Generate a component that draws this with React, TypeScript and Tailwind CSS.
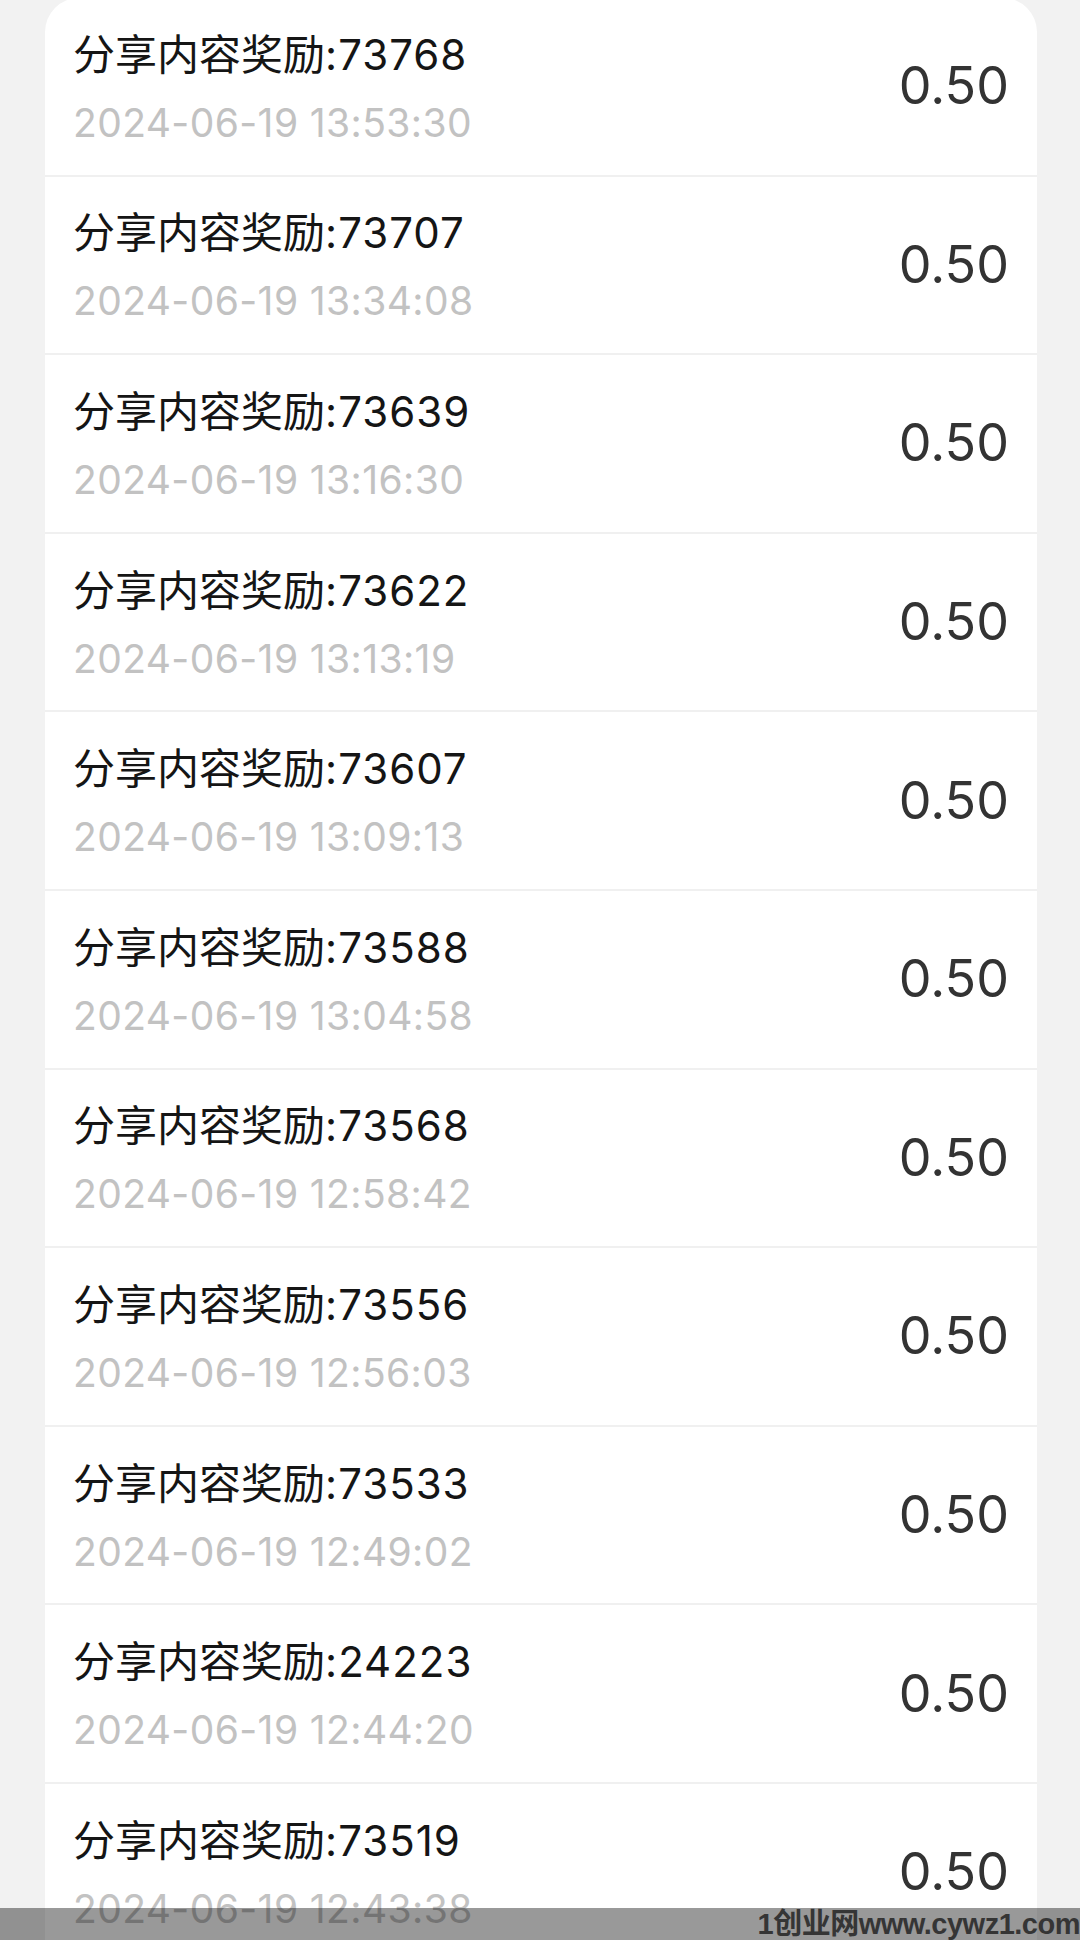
import { ReactElement } from "react";

interface RewardItem {
  id: string;
  time: string;
  amount: string;
}

const REWARDS: RewardItem[] = [
  { id: "73768", time: "2024-06-19 13:53:30", amount: "0.50" },
  { id: "73707", time: "2024-06-19 13:34:08", amount: "0.50" },
  { id: "73639", time: "2024-06-19 13:16:30", amount: "0.50" },
  { id: "73622", time: "2024-06-19 13:13:19", amount: "0.50" },
  { id: "73607", time: "2024-06-19 13:09:13", amount: "0.50" },
  { id: "73588", time: "2024-06-19 13:04:58", amount: "0.50" },
  { id: "73568", time: "2024-06-19 12:58:42", amount: "0.50" },
  { id: "73556", time: "2024-06-19 12:56:03", amount: "0.50" },
  { id: "73533", time: "2024-06-19 12:49:02", amount: "0.50" },
  { id: "24223", time: "2024-06-19 12:44:20", amount: "0.50" },
  { id: "73519", time: "2024-06-19 12:43:38", amount: "0.50" },
];

function App(): ReactElement {
  return (
    <div className="relative h-[1940px] w-[1080px] overflow-hidden bg-[#f2f2f2] font-['Inter','Noto_Sans_CJK_SC',sans-serif]">
      <div className="-mt-[2px] ml-[45px] mr-[43px] rounded-t-[34px] bg-white">
        <ul className="flex flex-col">
          {REWARDS.map((item) => (
            <RewardRow key={item.id} {...item} />
          ))}
        </ul>
      </div>

      {/* watermark strip */}
      <div className="absolute bottom-0 left-0 right-0 flex h-[32px] items-center justify-end bg-black/40">
        <span className="text-[29px] font-bold leading-none tracking-[-0.5px] text-[#353535] font-['Liberation_Sans','Noto_Sans_CJK_SC',sans-serif]">
          1创业网www.cywz1.com
        </span>
      </div>
    </div>
  );
}

function RewardRow({ id, time, amount }: RewardItem): ReactElement {
  return (
    <li className="flex h-[178.6px] items-center justify-between border-b-2 border-[#f0f0f0] pl-[28px] pr-[28px]">
      <div className="flex flex-col pt-[5px]">
        <span className="text-[42px] leading-[56px] text-[#151515]">
          分享内容奖励<span className="tracking-[1px]">:{id}</span>
        </span>
        <span className="mt-[12px] text-[39px] leading-[56px] tracking-[0.4px] text-[#c2c2c2]">
          {time}
        </span>
      </div>
      <span className="text-[52px] leading-none text-[#333333]">{amount}</span>
    </li>
  );
}

export default App;
